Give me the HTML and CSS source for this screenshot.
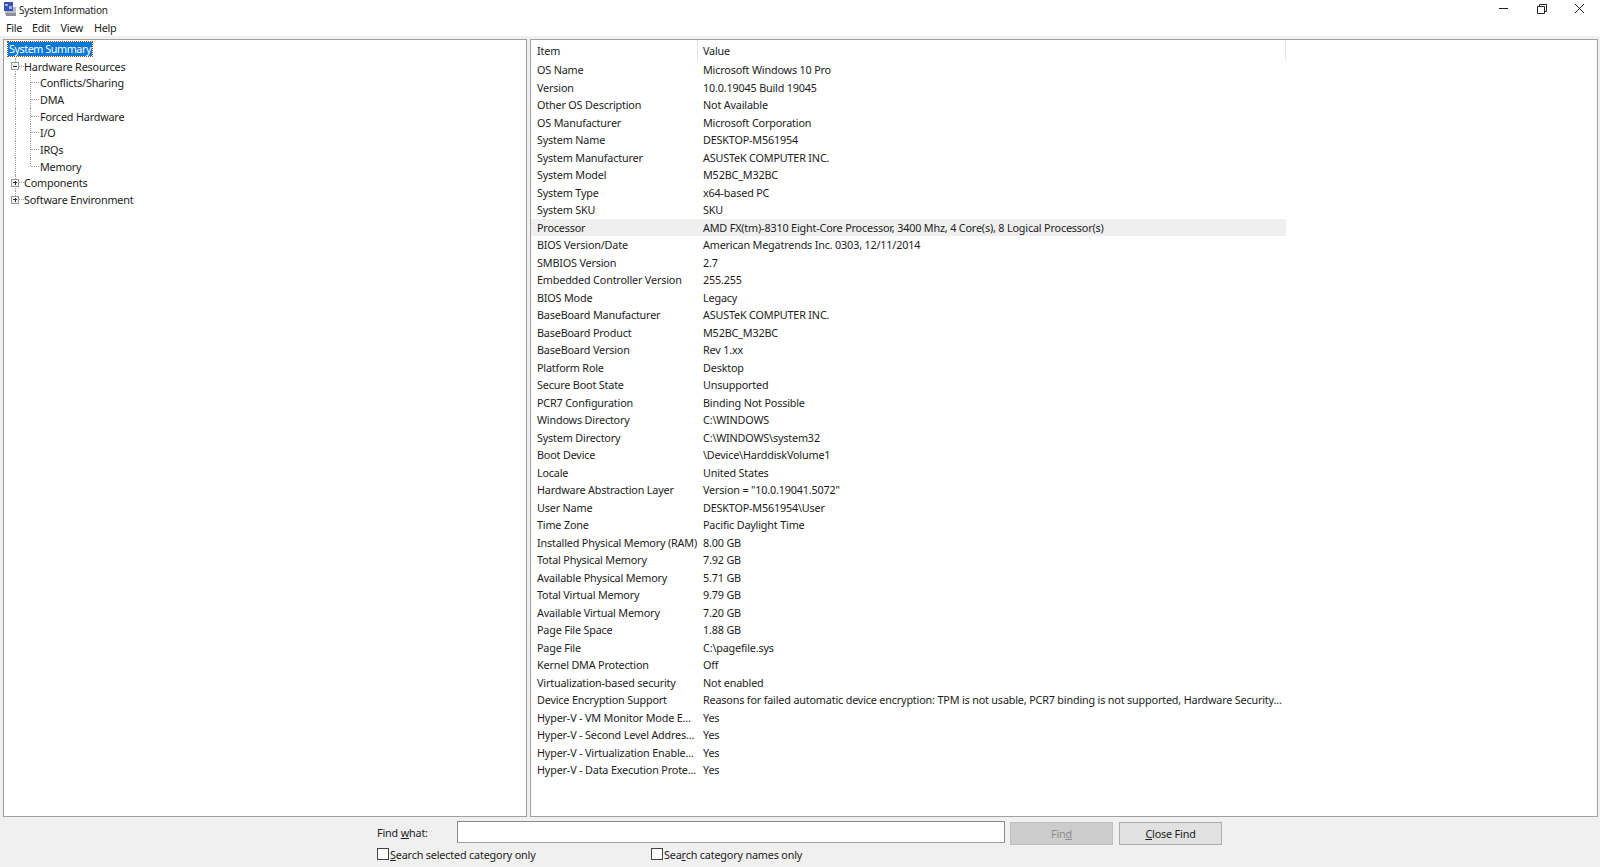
FILE: index.html
```html
<!DOCTYPE html>
<html lang="en">
<head>
<meta charset="utf-8">
<title>System Information</title>
<link rel="stylesheet" href="styles.css">
</head>
<body>
<div class="window">
  <header class="titlebar">
    <div class="title-left">
      <svg class="app-icon" width="16" height="16" viewBox="0 0 16 16"><rect x="3" y="6" width="11" height="8" fill="#b9bcc4"/><rect x="2" y="1" width="9" height="9" fill="#3b4fb8"/><path d="M3 3h3v2H3zM7 5h3v3H7z" fill="#9fb4ee"/><rect x="4" y="12" width="10" height="3" fill="#8b8f98"/></svg>
      <span class="title-text">System Information</span>
    </div>
    <div class="win-controls">
      <svg class="win-btn" width="38" height="18" viewBox="0 0 38 18"><path d="M21 8.500h9" stroke="#222" fill="none"/></svg>
      <svg class="win-btn" width="38" height="18" viewBox="0 0 38 18"><path d="M21.500 6.500h7v7h-7zM23.500 6.500v-2h7v7h-2" stroke="#222" fill="none"/></svg>
      <svg class="win-btn" width="46" height="18" viewBox="0 0 46 18"><path d="M21 4l9 9M30 4l-9 9" stroke="#222" fill="none"/></svg>
    </div>
  </header>
  <nav class="menubar"><span>File</span><span>Edit</span><span>View</span><span>Help</span></nav>
  <main class="panes">
    <section class="pane tree">
      <div class="tnode"><span class="selected">System Summary</span></div>
      <div class="tnode lvl1"><span class="box minus"></span><span class="dash"></span>Hardware Resources</div>
      <div class="tnode lvl2"><span class="g"></span><span class="dash long"></span>Conflicts/Sharing</div>
      <div class="tnode lvl2"><span class="g"></span><span class="dash long"></span>DMA</div>
      <div class="tnode lvl2"><span class="g"></span><span class="dash long"></span>Forced Hardware</div>
      <div class="tnode lvl2"><span class="g"></span><span class="dash long"></span>I/O</div>
      <div class="tnode lvl2"><span class="g"></span><span class="dash long"></span>IRQs</div>
      <div class="tnode lvl2"><span class="g last"></span><span class="dash long"></span>Memory</div>
      <div class="tnode lvl1"><span class="box plus"></span><span class="dash"></span>Components</div>
      <div class="tnode lvl1"><span class="box plus"></span><span class="dash"></span>Software Environment</div>
    </section>
    <section class="pane list">
      <div class="table">
        <div class="row head"><div class="item">Item</div><div class="value">Value</div></div>
        <div class="row"><div class="item">OS Name</div><div class="value">Microsoft Windows 10 Pro</div></div>
        <div class="row"><div class="item">Version</div><div class="value">10.0.19045 Build 19045</div></div>
        <div class="row"><div class="item">Other OS Description</div><div class="value">Not Available</div></div>
        <div class="row"><div class="item">OS Manufacturer</div><div class="value">Microsoft Corporation</div></div>
        <div class="row"><div class="item">System Name</div><div class="value">DESKTOP-M561954</div></div>
        <div class="row"><div class="item">System Manufacturer</div><div class="value">ASUSTeK COMPUTER INC.</div></div>
        <div class="row"><div class="item">System Model</div><div class="value">M52BC_M32BC</div></div>
        <div class="row"><div class="item">System Type</div><div class="value">x64-based PC</div></div>
        <div class="row"><div class="item">System SKU</div><div class="value">SKU</div></div>
        <div class="row hl"><div class="item">Processor</div><div class="value">AMD FX(tm)-8310 Eight-Core Processor, 3400 Mhz, 4 Core(s), 8 Logical Processor(s)</div></div>
        <div class="row"><div class="item">BIOS Version/Date</div><div class="value">American Megatrends Inc. 0303, 12/11/2014</div></div>
        <div class="row"><div class="item">SMBIOS Version</div><div class="value">2.7</div></div>
        <div class="row"><div class="item">Embedded Controller Version</div><div class="value">255.255</div></div>
        <div class="row"><div class="item">BIOS Mode</div><div class="value">Legacy</div></div>
        <div class="row"><div class="item">BaseBoard Manufacturer</div><div class="value">ASUSTeK COMPUTER INC.</div></div>
        <div class="row"><div class="item">BaseBoard Product</div><div class="value">M52BC_M32BC</div></div>
        <div class="row"><div class="item">BaseBoard Version</div><div class="value">Rev 1.xx</div></div>
        <div class="row"><div class="item">Platform Role</div><div class="value">Desktop</div></div>
        <div class="row"><div class="item">Secure Boot State</div><div class="value">Unsupported</div></div>
        <div class="row"><div class="item">PCR7 Configuration</div><div class="value">Binding Not Possible</div></div>
        <div class="row"><div class="item">Windows Directory</div><div class="value">C:\WINDOWS</div></div>
        <div class="row"><div class="item">System Directory</div><div class="value">C:\WINDOWS\system32</div></div>
        <div class="row"><div class="item">Boot Device</div><div class="value">\Device\HarddiskVolume1</div></div>
        <div class="row"><div class="item">Locale</div><div class="value">United States</div></div>
        <div class="row"><div class="item">Hardware Abstraction Layer</div><div class="value">Version = "10.0.19041.5072"</div></div>
        <div class="row"><div class="item">User Name</div><div class="value">DESKTOP-M561954\User</div></div>
        <div class="row"><div class="item">Time Zone</div><div class="value">Pacific Daylight Time</div></div>
        <div class="row"><div class="item">Installed Physical Memory (RAM)</div><div class="value">8.00 GB</div></div>
        <div class="row"><div class="item">Total Physical Memory</div><div class="value">7.92 GB</div></div>
        <div class="row"><div class="item">Available Physical Memory</div><div class="value">5.71 GB</div></div>
        <div class="row"><div class="item">Total Virtual Memory</div><div class="value">9.79 GB</div></div>
        <div class="row"><div class="item">Available Virtual Memory</div><div class="value">7.20 GB</div></div>
        <div class="row"><div class="item">Page File Space</div><div class="value">1.88 GB</div></div>
        <div class="row"><div class="item">Page File</div><div class="value">C:\pagefile.sys</div></div>
        <div class="row"><div class="item">Kernel DMA Protection</div><div class="value">Off</div></div>
        <div class="row"><div class="item">Virtualization-based security</div><div class="value">Not enabled</div></div>
        <div class="row"><div class="item">Device Encryption Support</div><div class="value">Reasons for failed automatic device encryption: TPM is not usable, PCR7 binding is not supported, Hardware Security...</div></div>
        <div class="row"><div class="item">Hyper-V - VM Monitor Mode E...</div><div class="value">Yes</div></div>
        <div class="row"><div class="item">Hyper-V - Second Level Addres...</div><div class="value">Yes</div></div>
        <div class="row"><div class="item">Hyper-V - Virtualization Enable...</div><div class="value">Yes</div></div>
        <div class="row"><div class="item">Hyper-V - Data Execution Prote...</div><div class="value">Yes</div></div>
      </div>
    </section>
  </main>
  <footer class="findbar">
    <div class="find-row">
      <label class="find-label">Find <u>w</u>hat:</label>
      <div class="find-input"></div>
      <div class="btn disabled">Fin<u>d</u></div>
      <div class="btn"><u>C</u>lose Find</div>
    </div>
    <div class="check-row">
      <div class="check first"><span class="cb"></span><span><u>S</u>earch selected category only</span></div>
      <div class="check"><span class="cb"></span><span>Sea<u>r</u>ch category names only</span></div>
    </div>
  </footer>
</div>
</body>
</html>
```
FILE: styles.css
```css
* { box-sizing: border-box; }
html, body { margin: 0; height: 100%; }
body {
  font-family: "Noto Sans", "Open Sans", sans-serif;
  font-size: 10.8px;
  letter-spacing: -0.17px;
  color: #1c1c1c;
  background: #f0f0f0;
}
u { text-underline-offset: 1px; }
.window { width: 1600px; height: 867px; display: flex; flex-direction: column; overflow: hidden; }
.titlebar { height: 18px; background: #fff; display: flex; justify-content: space-between; align-items: center; }
.title-left { display: flex; align-items: center; gap: 1px; padding-left: 2px; }
.title-text { font-size: 10px; letter-spacing: -0.25px; margin-top: 2px; }
.app-icon { display: block; }
.win-controls { display: flex; align-items: center; }
.win-btn { display: block; }
.menubar { height: 18px; margin-bottom: 1px; background: #fff; display: flex; padding-left: 6px; align-items: center; letter-spacing: -0.3px; }
.menubar span:nth-child(1) { width: 26px; }
.menubar span:nth-child(2) { width: 28.500px; }
.menubar span:nth-child(3) { width: 33.500px; }
.panes { height: 779px; margin-top: 1px; padding: 1px 2px 0 3px; display: flex; gap: 3px; }
.pane { background: #fff; border: 1px solid #a0a0a0; overflow: hidden; }
.tree { width: 524px; padding: 1px 0 0 4px; }
.list { flex: 1; }
.tnode { height: 16.7px; display: flex; align-items: center; white-space: nowrap; position: relative; }
.selected { background: #0a78d7; color: #fff; outline: 1px dotted #8a4a10; padding: 0 1px; line-height: 14px; letter-spacing: -0.45px; }
.lvl1 { padding-left: 3px; }
.tnode.lvl1::before, .tnode.lvl2::before {
  content: ""; position: absolute; left: 7px; top: 0; bottom: 0;
  border-left: 1px dotted #a0a0a0;
}
.tnode:nth-last-child(1)::before { bottom: 50%; }
.box { width: 8px; height: 8px; border: 1px solid #9a9a9a; background: #f4f4f4; position: relative; z-index: 1; flex: none; }
.box::before { content: ""; position: absolute; left: 1px; right: 1px; top: 2.500px; height: 1px; background: #2a2a2a; }
.plus::after { content: ""; position: absolute; top: 1px; bottom: 1px; left: 2.500px; width: 1px; background: #2a2a2a; }
.dash { width: 5px; border-top: 1px dotted #a0a0a0; flex: none; }
.dash.long { width: 8px; margin-right: 1px; }
.g { width: 23px; align-self: stretch; flex: none; border-right: 1px dotted #a0a0a0; }
.g.last { align-self: flex-start; height: 50%; }
.row { height: 17.5px; display: flex; align-items: center; white-space: nowrap; width: 755px; overflow: hidden; }
.row.head { height: 21px; margin-bottom: 0.200px; align-items: stretch; border-right: 1px solid #e8e8e8; }
.row.head .item { border-right: 1px solid #e6e6e6; line-height: 22px; }
.row.head .value { line-height: 22px; }
.item { width: 167px; padding-left: 6px; flex: none; overflow: hidden; }
.value { padding-left: 5px; flex: 1; overflow: hidden; }
.hl { background: #efefef; }
.findbar { flex: 1; background: #f0f0f0; padding: 4px 0 0 377px; }
.find-row { display: flex; align-items: flex-start; height: 24px; }
.find-label { width: 80px; line-height: 23px; }
.find-input { width: 548px; height: 22px; background: #fff; border: 1px solid #8a8a8a; border-bottom-color: #a0a0a0; }
.btn { width: 103px; height: 23px; margin-left: 5px; background: #e1e1e1; border: 1px solid #adadad; display: flex; align-items: center; justify-content: center; margin-top: 1px; white-space: pre; }
.btn + .btn { margin-left: 6px; }
.btn.disabled { background: #cccccc; border-color: #bfbfbf; color: #8c8c8c; }
.check-row { display: flex; height: 18px; align-items: center; }
.check { display: flex; align-items: center; gap: 1px; }
.check.first { width: 274px; }
.cb { width: 12px; height: 12px; background: #fff; border: 1px solid #444; flex: none; }
```
